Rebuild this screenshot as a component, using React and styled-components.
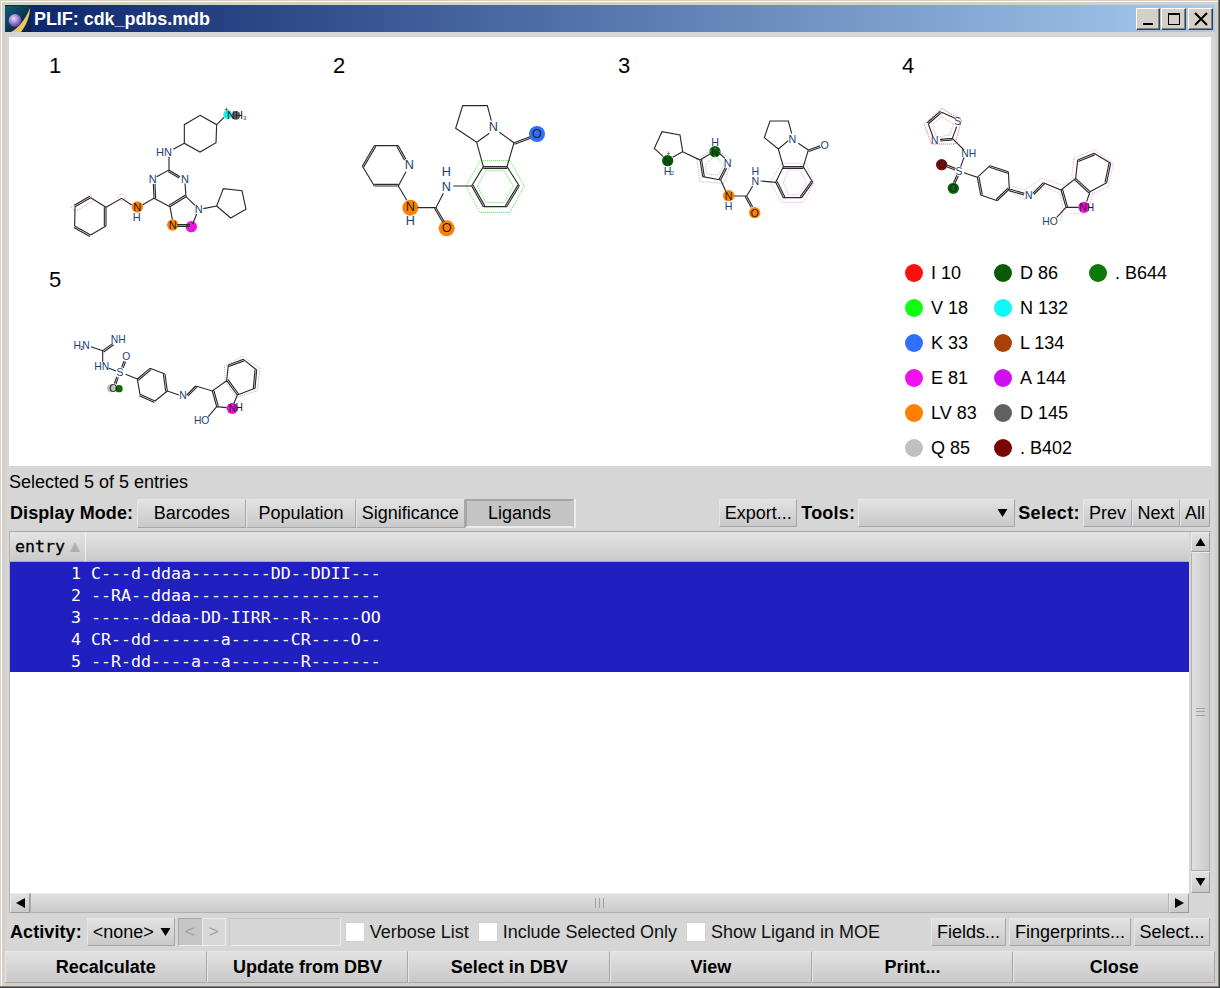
import React from 'react'
import styled, { createGlobalStyle } from 'styled-components'

const GlobalStyle = createGlobalStyle`
    html, body {
        margin: 0;
        padding: 0;
        background: #d4d0c8;
    }
    * {
        box-sizing: border-box;
    }
`

const UI_FONT = '"Liberation Sans", Arial, sans-serif'
const MONO_FONT = '"DejaVu Sans Mono", "Liberation Mono", monospace'

const Win = styled.div`
    width: 1220px;
    height: 988px;
    padding: 5px;
    display: flex;
    flex-direction: column;
    background: #d4d0c8;
    box-shadow: inset -1px -1px 0 #404040, inset -2px -2px 0 #808080,
        inset 1px 1px 0 #d4d0c8, inset 2px 2px 0 #fff;
    font-family: ${UI_FONT};
    font-size: 18px;
    color: #000;
    overflow: hidden;
`

const TitleBar = styled.div`
    height: 27px;
    flex: none;
    display: flex;
    align-items: center;
    padding: 0 2px 0 0;
    background: linear-gradient(90deg, #0a246a, #a6caf0);
`

const TitleText = styled.div`
    flex: 1;
    margin-left: 3px;
    padding-top: 1px;
    color: #fff;
    font-size: 17.9px;
    font-weight: bold;
    white-space: nowrap;
`

const CapButton = styled.div`
    width: ${(p) => p.$w}px;
    height: 22px;
    margin-left: ${(p) => p.$ml}px;
    display: flex;
    align-items: center;
    justify-content: center;
    background: #d4d0c8;
    border: 1px solid;
    border-color: #fff #404040 #404040 #fff;
    box-shadow: inset -1px -1px 0 #808080;
`

const Body = styled.div`
    flex: 1;
    display: flex;
    flex-direction: column;
    padding: 5px 4px 0;
    background: #d6d6d6;
    min-height: 0;
`

const Canvas = styled.div`
    height: 429px;
    flex: none;
    display: grid;
    grid-template-columns: 284px 285px 284px 1fr;
    grid-template-rows: 214px 215px;
    background: #fff;
`

const Cell = styled.div`
    grid-column: ${(p) => p.$col};
    grid-row: ${(p) => p.$row};
    padding-top: 16px;
    overflow: hidden;
`

const CellNum = styled.div`
    height: 26px;
    line-height: 26px;
    margin-bottom: 8px;
    padding-left: 40px;
    font-size: 22px;
`

const MolSvg = styled.svg`
    display: block;
    width: 284px;
    height: 164px;
`

const Bond = styled.path`
    fill: none;
    stroke: #2a2a2a;
    stroke-width: 3.4;
`

const Halo = styled.path`
    fill: none;
    stroke: ${(p) => p.$color};
    stroke-width: 3;
    stroke-dasharray: 3 3;
`

const Atom = styled.text`
    font-family: ${UI_FONT};
    fill: ${(p) => p.$color || '#1a3f70'};
    text-anchor: middle;
    dominant-baseline: central;
`

const Legend = styled.div`
    grid-column: 4;
    grid-row: 2;
    padding: 4px 0 0 43px;
    display: grid;
    grid-auto-flow: column;
    grid-template-columns: 89px 95px auto;
    grid-template-rows: repeat(6, 35px);
`

const LegendItem = styled.div`
    display: flex;
    align-items: center;
    gap: 8px;
    white-space: nowrap;
`

const LegendDot = styled.span`
    width: 18px;
    height: 18px;
    border-radius: 50%;
    background: ${(p) => p.$color};
`

const LegendText = styled.span`
    padding-top: 2px;
`

const Status = styled.div`
    height: 32px;
    flex: none;
    line-height: 32px;
`

const ToolRow = styled.div`
    height: 30px;
    flex: none;
    display: flex;
    align-items: center;
    white-space: nowrap;
`

const Label = styled.span`
    font-weight: bold;
    margin: ${(p) => p.$margin || '0'};
    padding-left: ${(p) => p.$pad || '0'};
    letter-spacing: ${(p) => p.$ls || 0}px;
`

const Btn = styled.div`
    height: 28px;
    width: ${(p) => p.$w}px;
    flex: none;
    display: flex;
    align-items: center;
    justify-content: center;
    margin-left: ${(p) => p.$ml || 0}px;
    background: linear-gradient(#e2e2e2, #c9c9c9);
    border: 1px solid;
    border-color: #e6e6e6 #a6a6a6 #a6a6a6 #e6e6e6;
    white-space: nowrap;
`

const TabGroup = styled.div`
    display: flex;
    margin-left: 4px;
    border-right: 2px solid #ececec;
`

const Tab = styled(Btn)`
    width: 109.25px;
    height: 29px;
    ${(p) => p.$active && `
        background: #c4c4c4;
        border: 2px solid;
        border-color: #a6a6a6 #c4c4c4 #ececec #a6a6a6;
    `}
`

const SelectBox = styled(Btn)`
    justify-content: flex-end;
    padding: 0 ${(p) => p.$pad || 6}px 0 0;
    gap: 6px;
`

const Arrow = styled.svg`
    width: 11px;
    height: 10px;
    display: block;
    flex: none;
`

const Spacer = styled.div`
    flex: 1;
`

const EdgeGap = styled.div`
    flex: 0 0 1px;
`

const TableArea = styled.div`
    height: 381px;
    flex: none;
    margin-top: 3px;
    display: grid;
    grid-template-columns: 1180px 22px;
    grid-template-rows: 361px 20px;
    border-top: 1px solid #a8a8a8;
`

const TableMain = styled.div`
    display: flex;
    flex-direction: column;
    background: #fff;
    border-left: 1px solid #b4b4b4;
`

const TableHead = styled.div`
    height: 30px;
    flex: none;
    display: flex;
    background: linear-gradient(#e4e4e4, #cacaca);
    border-bottom: 1px solid #a8a8c8;
`

const HeadCell = styled.div`
    width: 76px;
    display: flex;
    align-items: center;
    gap: 5px;
    padding-left: 5px;
    border-right: 1px solid #f0f0f0;
    font-family: ${MONO_FONT};
    font-size: 16.6px;
    -webkit-text-stroke: 0.3px #000;
`

const Rows = styled.div`
    background: #2020c0;
`

const Row = styled.div`
    height: 22px;
    display: flex;
    align-items: center;
    color: #fff;
    font-family: ${MONO_FONT};
    font-size: 16.6px;
    white-space: pre;
`

const RowNum = styled.span`
    width: 71px;
    margin-right: 10px;
    text-align: right;
`

const VScroll = styled.div`
    margin: 0 1px 0 2px;
    display: flex;
    flex-direction: column;
    background: linear-gradient(90deg, #e2e2e2, #c9c9c9);
`

const ScrollBtn = styled.div`
    width: ${(p) => p.$w || 20}px;
    height: ${(p) => p.$h || 20}px;
    flex: none;
    display: flex;
    align-items: center;
    justify-content: center;
    background: linear-gradient(#e2e2e2, #c9c9c9);
    border: 1px solid;
    border-color: #ececec #9a9a9a #9a9a9a #ececec;
`

const Track = styled.div`
    flex: 1;
    display: flex;
    align-items: center;
    justify-content: center;
    border: 1px solid #b0b0b0;
    border-top-color: #ececec;
`

const HScroll = styled.div`
    display: flex;
    background: linear-gradient(#e2e2e2, #c9c9c9);
    border-left: 1px solid #b4b4b4;
`

const GripV = styled.div`
    width: 9px;
    height: 8px;
    border-top: 1px solid #a0a0a0;
    border-bottom: 1px solid #a0a0a0;
    background: linear-gradient(#a0a0a0, #a0a0a0) center / 100% 1px no-repeat;
`

const GripH = styled.div`
    width: 9px;
    height: 10px;
    border-left: 1px solid #a0a0a0;
    border-right: 1px solid #a0a0a0;
    background: linear-gradient(#a0a0a0, #a0a0a0) center / 1px 100% no-repeat;
`

const ActivityRow = styled(ToolRow)`
    height: 28px;
    margin-top: 6px;
`

const StepGroup = styled.div`
    display: flex;
    margin-left: 3px;
`

const StepBtn = styled.div`
    width: 24px;
    height: 28px;
    display: flex;
    align-items: center;
    justify-content: center;
    color: #a0a0a0;
    font-size: 17px;
    background: ${(p) => (p.$sunk ? '#c6c6c6' : '#d8d8d8')};
    border: 1px solid;
    border-color: ${(p) => (p.$sunk ? '#a8a8a8 #c6c6c6 #ececec #a8a8a8' : '#ececec')};
`

const Field = styled.div`
    width: 112px;
    height: 28px;
    margin-left: 3px;
    background: #d6d6d6;
    border: 1px solid #c2c2c2;
    border-bottom-color: #ececec;
    border-right-color: #ececec;
`

const CheckBox = styled.span`
    width: 20px;
    height: 20px;
    flex: none;
    margin: 0 5px 0 ${(p) => p.$ml || 4}px;
    background: #fff;
    border: 1px solid #d0d0d0;
`

const CheckLabel = styled.span`
    color: #111;
    letter-spacing: ${(p) => p.$ls || 0}px;
`

const ActionBar = styled.div`
    height: 32px;
    flex: none;
    margin: 5px -4px 0;
    display: grid;
    grid-template-columns: repeat(6, 1fr);
`

const ActionBtn = styled(Btn)`
    width: auto;
    height: 32px;
    font-weight: bold;
`

// all molecule coordinates are in 3x picture pixels, one viewBox per cell
const dbl = ([x1, y1, x2, y2]) => {
    const dx = x2 - x1
    const dy = y2 - y1
    const len = Math.hypot(dx, dy)
    const ox = (-dy / len) * 5
    const oy = (dx / len) * 5
    return `M${x1} ${y1}L${x2} ${y2}M${x1 + ox} ${y1 + oy}L${x2 + ox} ${y2 + oy}`
}

const mols = [
    {
        num: 1,
        col: 1,
        row: 1,
        view: '27 261 852 492',
        size: 33,
        bonds: 'M600 346L650 374L648 428L600 456L553 430L553 374ZM650 374L672 352M553 430L520 448M507 470L507 510L470 530M555 550L558 590M510 620L462 595M558 590L585 616M510 620L517 658M590 642L578 672M610 626L650 618L670 566L726 572L738 628L692 654L650 618M462 595L428 614M395 615L365 595L318 622M318 622L272 593M225 620L224 678M272 705L318 678',
        doubles: [
            [507, 510, 540, 530],
            [558, 590, 510, 620],
            [462, 595, 460, 552],
            [532, 674, 570, 674],
            [272, 593, 225, 620],
            [224, 678, 272, 705],
            [318, 622, 318, 678],
        ],
        halos: [
            ['M214 622L272 586L283 600L225 635Z', '#f49090'],
            ['M355 592a10 10 0 1 0 20 0a10 10 0 1 0 -20 0', '#f49090'],
        ],
        dots: [
            [683, 344, 13, '#10f0f0'],
            [708, 346, 13, '#606060'],
            [412, 621, 17, '#ff8000'],
            [518, 675, 17, '#ff8000'],
            [574, 680, 17, '#f010e0'],
        ],
        atoms: [
            [705, 346, 'NH', '#222'],
            [734, 353, '3', '#1a3f70', 18],
            [679, 328, '+', '#222', 22],
            [492, 455, 'HN'],
            [555, 536, 'N'],
            [458, 538, 'N'],
            [596, 628, 'N'],
            [518, 675, 'N', '#222'],
            [412, 621, 'N', '#222'],
            [410, 650, 'H'],
        ],
    },
    {
        num: 2,
        col: 2,
        row: 1,
        view: '-111 111 852 492',
        size: 38,
        bonds: 'M133 287L205 287M228 365L205 408M133 408L97 348M205 408L230 450M262 473L318 473L340 430M370 408L425 408L460 350M531 350L568 408M530 470L460 470M460 350L440 277M531 350L552 278L508 247M440 277L478 250M440 277L377 235L398 167L472 167L484 212',
        doubles: [
            [205, 287, 228, 328],
            [205, 408, 133, 408],
            [97, 348, 133, 287],
            [318, 473, 343, 515],
            [460, 350, 531, 350],
            [568, 408, 530, 470],
            [460, 470, 425, 408],
            [552, 278, 600, 260],
        ],
        halos: [
            ['M408 408L450 332L540 332L583 408L540 487L450 487Z', '#44ee44'],
            ['M442 408L468 362L522 362L550 408L522 458L468 458Z', '#44ee44'],
        ],
        dots: [
            [241, 473, 24, '#ff8000'],
            [350, 535, 24, '#ff8000'],
            [621, 252, 24, '#3070ff'],
        ],
        atoms: [
            [238, 345, 'N'],
            [241, 471, 'N', '#222'],
            [241, 514, 'H'],
            [349, 410, 'N'],
            [349, 366, 'H'],
            [350, 535, 'O', '#222'],
            [490, 232, 'N'],
            [621, 252, 'O', '#222'],
        ],
    },
    {
        num: 3,
        col: 3,
        row: 1,
        view: '-126 111 852 492',
        size: 32,
        bonds: 'M130 320L103 295L126 245L180 255L188 305L158 322M188 305L240 330L270 312M300 312L315 325M302 390L248 380M302 390L318 425M342 438L380 438L398 408M422 393L467 397L490 350M550 350L578 397M545 443L490 443M490 350L475 297M550 350L565 300L535 280M475 297L505 272M475 297L433 263L450 213L505 213L515 250',
        doubles: [
            [320, 355, 302, 390],
            [248, 380, 240, 330],
            [380, 438, 398, 470],
            [490, 350, 550, 350],
            [578, 397, 545, 443],
            [490, 443, 467, 397],
            [565, 300, 600, 287],
        ],
        halos: [
            ['M450 397L485 340L558 340L582 397L550 457L485 457Z', '#e8a0f0'],
            ['M490 398L505 360L540 360L560 398L535 435L505 435Z', '#e8a0f0'],
            ['M230 328L285 295L335 330L312 400L240 395Z', '#a0c8a0'],
            ['M255 345L285 318L312 345L295 375L262 372Z', '#a0c8a0'],
        ],
        dots: [
            [143, 332, 17, '#006400'],
            [285, 305, 17, '#006400'],
            [326, 437, 17, '#ff8000'],
            [404, 488, 17, '#ff8000'],
        ],
        atoms: [
            [143, 332, 'N', '#222'],
            [145, 310, '+', '#222', 20],
            [143, 362, 'H'],
            [157, 370, '2', '#1a3f70', 18],
            [285, 305, 'N', '#222'],
            [285, 275, 'H'],
            [323, 340, 'N'],
            [326, 437, 'N', '#222'],
            [326, 467, 'H'],
            [406, 392, 'N'],
            [406, 362, 'H'],
            [404, 488, 'O', '#222'],
            [517, 266, 'N'],
            [614, 284, 'O'],
        ],
    },
    {
        num: 4,
        col: 4,
        row: 1,
        view: '-84 261 852 492',
        size: 31,
        bonds: 'M155 337L195 355M115 372L128 408M187 415L200 380M187 415L222 450M222 472L212 500M222 518L262 532L300 497M355 515L358 567M322 602L272 585M460 548L513 570L557 535M600 575L590 605M565 622L528 622L500 652M557 535L563 480M612 460L662 490M650 548L600 575',
        doubles: [
            [155, 337, 115, 372],
            [150, 418, 187, 415],
            [195, 510, 170, 500],
            [205, 528, 195, 550],
            [300, 497, 355, 515],
            [358, 567, 322, 602],
            [272, 585, 262, 532],
            [358, 567, 403, 580],
            [428, 580, 460, 548],
            [557, 535, 600, 575],
            [528, 622, 513, 570],
            [563, 480, 612, 460],
            [662, 490, 650, 548],
        ],
        halos: [
            ['M155 325L103 373L125 432L195 432L215 360Z', '#ff5a5a'],
            ['M155 350L125 375L140 412L180 405L190 372Z', '#f8a0a0'],
            ['M612 450L670 490L655 560L600 585L545 530L552 475Z', '#e8a0f0'],
            ['M360 575L405 598L465 560L510 580L520 630L510 665', '#eeb0a0'],
            ['M368 560L405 570L455 535L515 555L560 545L610 580L590 640L540 640', '#eeb0a0'],
        ],
        dots: [
            [155, 494, 17, '#7a0505'],
            [190, 565, 17, '#0a6a0a'],
            [582, 622, 17, '#f010e0'],
        ],
        atoms: [
            [203, 365, 'S'],
            [134, 422, 'N'],
            [236, 460, 'NH'],
            [207, 514, 'S'],
            [155, 494, 'O', '#222'],
            [190, 565, 'O', '#222'],
            [416, 587, 'N'],
            [590, 623, 'NH', '#222'],
            [480, 664, 'HO'],
        ],
    },
    {
        num: 5,
        col: 1,
        row: 2,
        view: '-63 123 852 492',
        size: 31,
        bonds: 'M183 260L218 272M218 272L218 305M237 325L258 333M287 343L322 357M360 325L405 342M412 393L375 423M330 403L322 357M412 393L447 405M497 378L547 393L590 362M622 405L612 430M590 443L560 440L535 470M590 362L595 315M640 298L680 330M675 385L622 405',
        doubles: [
            [218, 272, 248, 250],
            [275, 322, 282, 303],
            [265, 352, 258, 372],
            [322, 357, 360, 325],
            [405, 342, 412, 393],
            [330, 403, 375, 423],
            [470, 405, 497, 378],
            [560, 440, 547, 393],
            [595, 315, 640, 298],
            [680, 330, 675, 385],
            [622, 405, 590, 362],
        ],
        halos: [['M583 320L637 288L690 325L682 392L620 412L585 365Z', '#c0b0c0']],
        dots: [
            [243, 385, 12, '#c0c0c0'],
            [267, 386, 11, '#0a6a0a'],
            [607, 445, 17, '#f010e0'],
        ],
        atoms: [
            [142, 255, 'H'],
            [156, 263, '2', '#222', 18],
            [168, 255, 'N'],
            [265, 238, 'NH'],
            [215, 320, 'HN'],
            [270, 338, 'S'],
            [289, 290, 'O'],
            [250, 385, 'O', '#222'],
            [459, 407, 'N'],
            [607, 445, 'N', '#222'],
            [628, 443, 'H', '#222'],
            [515, 481, 'HO'],
        ],
    },
]

const legend = [
    ['I 10', '#ff1010'],
    ['V 18', '#10ff10'],
    ['K 33', '#3070ff'],
    ['E 81', '#f010f0'],
    ['LV 83', '#ff8000'],
    ['Q 85', '#c0c0c0'],
    ['D 86', '#0a5a0a'],
    ['N 132', '#10f8f8'],
    ['L 134', '#a84008'],
    ['A 144', '#d010f0'],
    ['D 145', '#606060'],
    ['. B402', '#7a0505'],
    ['. B644', '#0a7a0a'],
]

const rows = [
    'C---d-ddaa--------DD--DDII---',
    '--RA--ddaa-------------------',
    '------ddaa-DD-IIRR---R-----OO',
    'CR--dd-------a------CR----O--',
    '--R-dd----a--a-------R-------',
]

const Molecule = ({ mol }) => (
    <Cell $col={mol.col} $row={mol.row}>
        <CellNum>{mol.num}</CellNum>
        <MolSvg viewBox={mol.view}>
            {mol.dots.map(([x, y, r, c]) => (
                <circle key={`${x}-${y}`} cx={x} cy={y} r={r} fill={c} />
            ))}
            {mol.halos.map(([d, c]) => (
                <Halo key={d} d={d} $color={c} />
            ))}
            <Bond d={mol.bonds + mol.doubles.map(dbl).join('')} />
            {mol.atoms.map(([x, y, t, c, s]) => (
                <Atom key={`${x}-${y}`} x={x} y={y} $color={c} fontSize={s || mol.size}>
                    {t}
                </Atom>
            ))}
        </MolSvg>
    </Cell>
)

const Tri = ({ dir, color = '#000' }) => {
    const points = {
        up: '5.5,1 10.5,9 0.5,9',
        down: '0.5,1 10.5,1 5.5,9',
        left: '10,0 10,10 1,5',
        right: '1,0 1,10 10,5',
    }
    return (
        <Arrow viewBox="0 0 11 10">
            <polygon points={points[dir]} fill={color} />
        </Arrow>
    )
}

const AppIcon = () => (
    <svg width="26" height="26" viewBox="0 0 26 26">
        <defs>
            <linearGradient id="iconBg" x1="0" y1="0" x2="1" y2="1">
                <stop offset="0" stopColor="#0f6070" />
                <stop offset="0.6" stopColor="#0a2e50" />
                <stop offset="1" stopColor="#081c48" />
            </linearGradient>
            <radialGradient id="iconBall" cx="0.4" cy="0.35" r="0.7">
                <stop offset="0" stopColor="#e8dcf8" />
                <stop offset="0.55" stopColor="#9878d0" />
                <stop offset="1" stopColor="#4a3088" />
            </radialGradient>
        </defs>
        <rect width="26" height="26" fill="url(#iconBg)" />
        <path d="M6 26C14 22 21 12 25 2C25 10 21 20 16 26Z" fill="#e8c860" />
        <circle cx="10" cy="14.5" r="6.5" fill="url(#iconBall)" />
    </svg>
)

export default function App() {
    return (
        <Win>
            <GlobalStyle />
            <TitleBar>
                <AppIcon />
                <TitleText>PLIF: cdk_pdbs.mdb</TitleText>
                <CapButton $w={24} $ml={1}>
                    <svg width="14" height="14" viewBox="0 0 14 14">
                        <rect x="2" y="11" width="10" height="2" fill="#000" />
                    </svg>
                </CapButton>
                <CapButton $w={25} $ml={1}>
                    <svg width="14" height="14" viewBox="0 0 14 14">
                        <rect x="1" y="1" width="12" height="2" fill="#000" />
                        <rect x="1.5" y="1.5" width="11" height="11" fill="none" stroke="#000" />
                    </svg>
                </CapButton>
                <CapButton $w={25} $ml={2}>
                    <svg width="14" height="14" viewBox="0 0 14 14">
                        <path d="M1 1L13 13M13 1L1 13" stroke="#000" strokeWidth="2" />
                    </svg>
                </CapButton>
            </TitleBar>
            <Body>
                <Canvas>
                    {mols.map((m) => (
                        <Molecule key={m.num} mol={m} />
                    ))}
                    <Legend>
                        {legend.map(([text, color]) => (
                            <LegendItem key={text}>
                                <LegendDot $color={color} />
                                <LegendText>{text}</LegendText>
                            </LegendItem>
                        ))}
                    </Legend>
                </Canvas>
                <Status>Selected 5 of 5 entries</Status>
                <ToolRow>
                    <Label $pad="1px" $ls={0.08}>
                        Display Mode:
                    </Label>
                    <TabGroup>
                        <Tab>Barcodes</Tab>
                        <Tab>Population</Tab>
                        <Tab>Significance</Tab>
                        <Tab $active>Ligands</Tab>
                    </TabGroup>
                    <Spacer />
                    <Btn $w={78}>Export...</Btn>
                    <Label $margin="0 3px 0 4px" $ls={0.2}>
                        Tools:
                    </Label>
                    <SelectBox $w={157}>
                        <Tri dir="down" />
                    </SelectBox>
                    <Label $margin="0 3px 0 3px" $ls={0.4}>
                        Select:
                    </Label>
                    <Btn $w={49}>Prev</Btn>
                    <Btn $w={48}>Next</Btn>
                    <Btn $w={30}>All</Btn>
                    <EdgeGap />
                </ToolRow>
                <TableArea>
                    <TableMain>
                        <TableHead>
                            <HeadCell>
                                entry
                                <svg width="10" height="10" viewBox="0 0 10 10">
                                    <polygon points="5,0 10,10 0,10" fill="#b0b0b0" />
                                </svg>
                            </HeadCell>
                        </TableHead>
                        <Rows>
                            {rows.map((seq, i) => (
                                <Row key={seq}>
                                    <RowNum>{i + 1}</RowNum>
                                    {seq}
                                </Row>
                            ))}
                        </Rows>
                    </TableMain>
                    <VScroll>
                        <ScrollBtn $w={19}>
                            <Tri dir="up" />
                        </ScrollBtn>
                        <Track>
                            <GripV />
                        </Track>
                        <ScrollBtn $w={19} $h={22}>
                            <Tri dir="down" />
                        </ScrollBtn>
                    </VScroll>
                    <HScroll>
                        <ScrollBtn>
                            <Tri dir="left" />
                        </ScrollBtn>
                        <Track>
                            <GripH />
                        </Track>
                        <ScrollBtn>
                            <Tri dir="right" />
                        </ScrollBtn>
                    </HScroll>
                </TableArea>
                <ActivityRow>
                    <Label $pad="1px" $ls={0.08}>
                        Activity:
                    </Label>
                    <SelectBox $w={88} $ml={5} $pad={3}>
                        &lt;none&gt;
                        <Tri dir="down" />
                    </SelectBox>
                    <StepGroup>
                        <StepBtn $sunk>&lt;</StepBtn>
                        <StepBtn>&gt;</StepBtn>
                    </StepGroup>
                    <Field />
                    <CheckBox />
                    <CheckLabel>Verbose List</CheckLabel>
                    <CheckBox $ml={9} />
                    <CheckLabel $ls={-0.05}>Include Selected Only</CheckLabel>
                    <CheckBox $ml={9} />
                    <CheckLabel>Show Ligand in MOE</CheckLabel>
                    <Spacer />
                    <Btn $w={75}>Fields...</Btn>
                    <Btn $w={122} $ml={3}>
                        Fingerprints...
                    </Btn>
                    <Btn $w={76} $ml={3}>
                        Select...
                    </Btn>
                    <EdgeGap />
                </ActivityRow>
                <ActionBar>
                    <ActionBtn>Recalculate</ActionBtn>
                    <ActionBtn>Update from DBV</ActionBtn>
                    <ActionBtn>Select in DBV</ActionBtn>
                    <ActionBtn>View</ActionBtn>
                    <ActionBtn>Print...</ActionBtn>
                    <ActionBtn>Close</ActionBtn>
                </ActionBar>
            </Body>
        </Win>
    )
}
